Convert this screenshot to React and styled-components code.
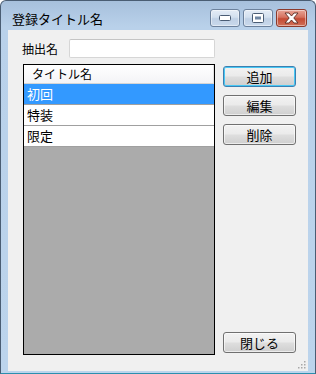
import React from 'react'
import styled, { createGlobalStyle } from 'styled-components'

const Global = createGlobalStyle`
  html, body {
    margin: 0;
    padding: 0;
    background: #ffffff;
  }
  * {
    box-sizing: border-box;
  }
`

const font = `"MS UI Gothic", "Noto Sans CJK JP", "Noto Sans", sans-serif`

const Frame = styled.div`
  width: 316px;
  height: 374px;
  border: 1px solid #4a5d73;
  border-bottom-color: #2b8fae;
  border-radius: 6px 6px 0 0;
  background: linear-gradient(#a7c0dc 0px, #b9d1ea 26px, #bcd4ec 100%);
  padding: 0 7px 2px 7px;
  display: flex;
  flex-direction: column;
  font-family: ${font};
`

const TitleBar = styled.div`
  height: 29px;
  display: flex;
  align-items: flex-start;
  justify-content: space-between;
`

const Title = styled.div`
  font-size: 13px;
  color: #000;
  margin: 10px 0 0 4px;
  line-height: 16px;
`

const Caption = styled.div`
  display: flex;
  gap: 3px;
  margin-top: 8px;
  margin-right: 1px;
`

const CapButton = styled.div`
  width: ${p => (p.$close ? 31 : 30)}px;
  height: 18px;
  border: 1px solid ${p => (p.$close ? '#8c3a2c' : '#6c819c')};
  border-radius: 3px;
  display: flex;
  align-items: center;
  justify-content: center;
  background: ${p =>
    p.$close
      ? 'linear-gradient(#e8a597 0%, #d6725f 45%, #c44a33 55%, #d0705a 100%)'
      : 'linear-gradient(#e4ecf6 0%, #d3e0ef 45%, #bfd0e5 55%, #c9d9ec 100%)'};
  box-shadow: inset 0 0 0 1px rgba(255, 255, 255, 0.45);
`

const Client = styled.div`
  height: 341px;
  background: #f0f0f0;
  position: relative;
  display: flex;
  flex-direction: column;
`

const FieldRow = styled.div`
  display: flex;
  align-items: center;
  margin-top: 9px;
  padding-left: 14px;
  height: 19px;
`

const Label = styled.span`
  width: 47px;
  font-size: 12px;
  color: #000;
`

const TextBox = styled.div`
  width: 146px;
  height: 19px;
  background: #fff;
  border: 1px solid #d6d6d6;
  border-top-color: #c4c4c4;
  border-radius: 2px;
`

const Body = styled.div`
  display: flex;
  margin-top: 6px;
  padding-left: 15px;
`

const ListBox = styled.div`
  width: 192px;
  height: 291px;
  border: 1px solid #000;
  background: #ababab;
  display: flex;
  flex-direction: column;
`

const Header = styled.div`
  height: 19px;
  background: linear-gradient(#ffffff, #f4f4f6);
  border-bottom: 1px solid #d5d5d5;
  border-right: 1px solid #e2e2e2;
  font-size: 12px;
  line-height: 18px;
  padding-left: 8px;
  color: #000;
`

const Row = styled.div`
  height: 21px;
  border-bottom: 1px solid #a0a0a0;
  background: ${p => (p.$selected ? '#3399ff' : '#ffffff')};
  color: ${p => (p.$selected ? '#ffffff' : '#000000')};
  font-size: 13px;
  line-height: 20px;
  padding-left: 3px;
`

const Buttons = styled.div`
  display: flex;
  flex-direction: column;
  margin-left: 8px;
  padding-top: 2px;
  padding-bottom: 2px;
  gap: 8px;
`

const Button = styled.div`
  width: 73px;
  height: 21px;
  border: 1px solid ${p => (p.$focus ? '#3c7fb1' : '#707070')};
  border-radius: 3px;
  background: linear-gradient(#f2f2f2 0%, #ebebeb 45%, #dddddd 55%, #cfcfcf 100%);
  box-shadow: ${p =>
    p.$focus ? 'inset 0 0 0 1px #48c8f4' : 'inset 0 0 0 1px rgba(255,255,255,0.6)'};
  display: flex;
  align-items: center;
  justify-content: center;
  font-size: 13px;
  color: #000;
  margin-top: ${p => (p.$bottom ? 'auto' : '0')};
`

const Grip = styled.svg`
  position: absolute;
  right: 2px;
  bottom: 2px;
`

const MinIcon = () => (
  <svg width="12" height="6" viewBox="0 0 12 6">
    <rect x="0.5" y="0.5" width="11" height="5" rx="1" fill="#fff" stroke="#4a5c74" />
  </svg>
)

const MaxIcon = () => (
  <svg width="12" height="10" viewBox="0 0 12 10">
    <rect x="0.5" y="0.5" width="11" height="9" rx="1" fill="#fff" stroke="#4a5c74" />
    <rect x="3" y="3.5" width="6" height="3" fill="#6f86a3" />
  </svg>
)

const CloseIcon = () => (
  <svg width="15" height="12" viewBox="0 0 15 12">
    <path
      d="M1 1 H5 L7.5 4 L10 1 H14 L9.8 6 L14 11 H10 L7.5 8 L5 11 H1 L5.2 6 Z"
      fill="#fff"
      stroke="#5a2a22"
      strokeWidth="0.9"
      strokeLinejoin="round"
    />
  </svg>
)

const titles = ['初回', '特装', '限定']

export default function App() {
  return (
    <>
      <Global />
      <Frame>
        <TitleBar>
          <Title>登録タイトル名</Title>
          <Caption>
            <CapButton><MinIcon /></CapButton>
            <CapButton><MaxIcon /></CapButton>
            <CapButton $close><CloseIcon /></CapButton>
          </Caption>
        </TitleBar>
        <Client>
          <FieldRow>
            <Label>抽出名</Label>
            <TextBox />
          </FieldRow>
          <Body>
            <ListBox>
              <Header>タイトル名</Header>
              {titles.map((t, i) => (
                <Row key={t} $selected={i === 0}>{t}</Row>
              ))}
            </ListBox>
            <Buttons>
              <Button $focus>追加</Button>
              <Button>編集</Button>
              <Button>削除</Button>
              <Button $bottom>閉じる</Button>
            </Buttons>
          </Body>
          <Grip width="9" height="9" viewBox="0 0 9 9">
            {[[7, 1], [4, 4], [7, 4], [1, 7], [4, 7], [7, 7]].map(([x, y]) => (
              <rect key={`${x}-${y}`} x={x} y={y} width="1.5" height="1.5" fill="#a8a8a8" />
            ))}
          </Grip>
        </Client>
      </Frame>
    </>
  )
}
